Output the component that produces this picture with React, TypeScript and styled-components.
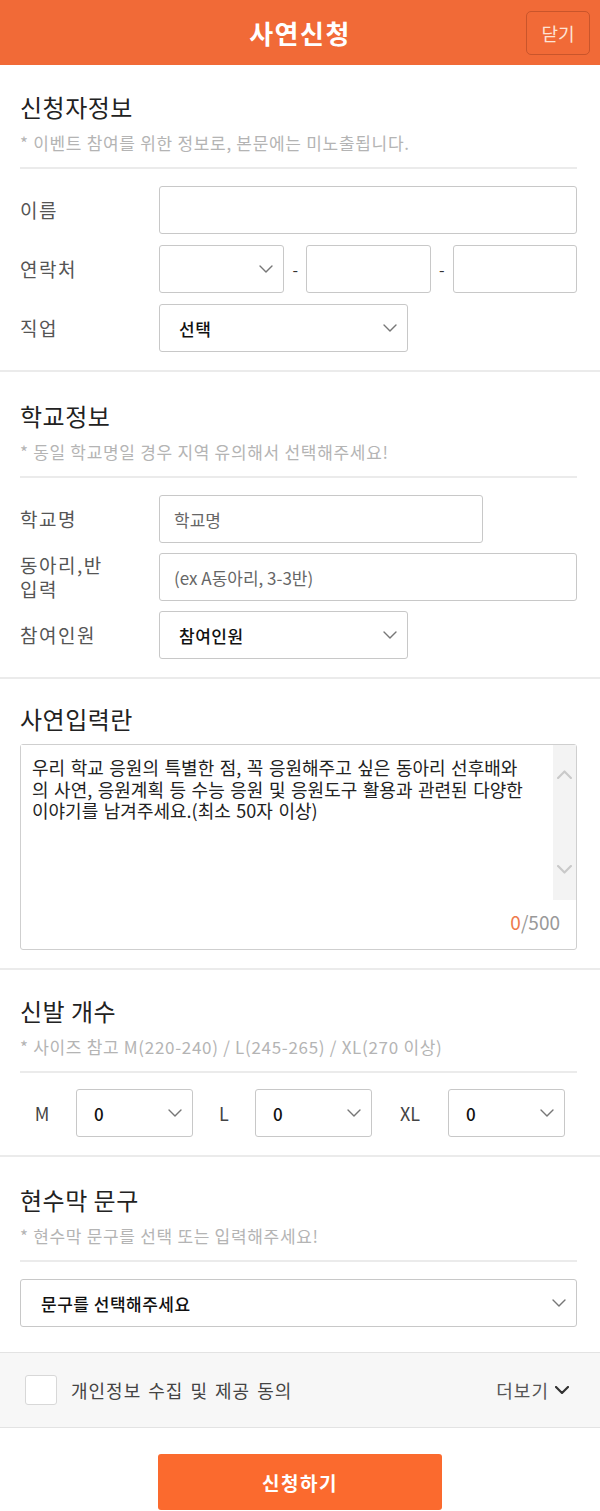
import React from 'react';
import styled, { createGlobalStyle } from 'styled-components';

const GlobalStyle = createGlobalStyle`
    html, body {
        margin: 0;
        padding: 0;
        background: #fff;
    }
    body {
        font-family: 'Noto Sans CJK KR', 'Noto Sans', sans-serif;
        color: #333;
    }
    * {
        box-sizing: border-box;
    }
`;

const Page = styled.div`
    width: 600px;
`;

const Header = styled.header`
    height: 65px;
    background: #f16a37;
    display: grid;
    grid-template-columns: 1fr auto 1fr;
    align-items: center;
`;

const HeaderTitle = styled.h1`
    grid-column: 2;
    margin: 0;
    font-size: 26px;
    font-weight: 700;
    color: #fff;
    letter-spacing: 1.5px;
`;

const CloseButton = styled.button`
    grid-column: 3;
    justify-self: end;
    margin-right: 10px;
    width: 64px;
    height: 44px;
    border: 1px solid #c9552b;
    border-radius: 5px;
    background: #f16a37;
    color: #fde3d6;
    font-family: inherit;
    font-size: 18px;
    padding: 0;
`;

const Section = styled.section<{ $top?: number; $noBorder?: boolean }>`
    padding: ${p => p.$top ?? 27}px 23px ${p => (p.$noBorder ? '25px' : '18px')} 20px;
    border-bottom: ${p => (p.$noBorder ? 'none' : '2px solid #ebebeb')};
`;

const SectionTitle = styled.h2`
    margin: 0;
    font-size: 24px;
    line-height: 30px;
    font-weight: 400;
    letter-spacing: 0.5px;
    color: #222;
`;

const SubTitle = styled.p`
    margin: 10px 0 0;
    padding-bottom: 13px;
    border-bottom: 2px solid #ebebeb;
    font-size: 17px;
    line-height: 22px;
    letter-spacing: 0.7px;
    color: #b4b4b4;
`;

const Fields = styled.div<{ $gap?: number }>`
    padding-top: 17px;
    display: flex;
    flex-direction: column;
    gap: ${p => p.$gap ?? 11}px;
`;

const FieldRow = styled.div`
    display: grid;
    grid-template-columns: 139px 1fr;
    align-items: center;
`;

const Label = styled.label`
    font-size: 19px;
    line-height: 24px;
    letter-spacing: 1.5px;
    color: #555;
`;

const TextInput = styled.input<{ $width?: string }>`
    width: ${p => p.$width || '100%'};
    height: 48px;
    border: 1px solid #c8c8c8;
    border-radius: 3px;
    padding: 0 14px;
    font-family: inherit;
    font-size: 17px;
    color: #333;
    outline: none;
    &::placeholder {
        color: #666;
    }
`;

const SelectBox = styled.div<{ $width?: string; $pad?: number }>`
    width: ${p => p.$width || '100%'};
    height: 48px;
    border: 1px solid #c8c8c8;
    border-radius: 3px;
    background: #fff;
    display: flex;
    align-items: center;
    justify-content: space-between;
    padding: 0 10px 0 ${p => p.$pad ?? 19}px;
    font-size: 17px;
    font-weight: 500;
    letter-spacing: 0.5px;
    color: #111;
`;

const PhoneGroup = styled.div`
    display: flex;
    align-items: center;
    > * {
        flex: 1;
        min-width: 0;
    }
`;

const Dash = styled.span`
    flex: 0 0 22px !important;
    text-align: center;
    font-size: 16px;
    color: #333;
`;

const StoryBox = styled.div`
    margin-top: 10px;
    height: 206px;
    border: 1px solid #cfcfcf;
    border-radius: 3px;
    display: flex;
    flex-direction: column;
`;

const StoryBody = styled.div`
    height: 155px;
    display: flex;
`;

const StoryText = styled.textarea`
    flex: 1;
    border: 0;
    resize: none;
    outline: none;
    overflow: hidden;
    padding: 12px 4px 0 11px;
    font-family: inherit;
    font-size: 18px;
    line-height: 21.7px;
    word-spacing: 1.5px;
    color: #222;
    &::placeholder {
        color: #222;
        opacity: 1;
    }
`;

const ScrollTrack = styled.div`
    width: 23px;
    background: #f3f3f3;
    display: flex;
    flex-direction: column;
    justify-content: space-between;
    align-items: center;
    padding: 25px 0 26px;
`;

const Counter = styled.div`
    flex: 1;
    display: flex;
    align-items: center;
    justify-content: flex-end;
    padding: 0 16px 6px 0;
    font-size: 19px;
    color: #999;
`;

const CountNow = styled.span`
    color: #ee7a4c;
`;

const ShoeRow = styled.div`
    padding-top: 16px;
    display: grid;
    grid-template-columns: 56px 117px 62px 117px 76px 117px;
    align-items: center;
`;

const SizeLabel = styled.span<{ $shift?: number }>`
    text-align: center;
    padding-right: ${p => p.$shift ?? 0}px;
    font-size: 18px;
    color: #444;
`;

const AgreeBar = styled.div`
    height: 76px;
    background: #f7f7f7;
    border-top: 1px solid #e3e3e3;
    border-bottom: 1px solid #e3e3e3;
    display: flex;
    align-items: center;
    padding: 0 31px 0 25px;
`;

const CheckBox = styled.span`
    width: 32px;
    height: 30px;
    background: #fff;
    border: 1px solid #d8d8d8;
    border-radius: 3px;
`;

const AgreeText = styled.span`
    margin-left: 14px;
    font-size: 18px;
    letter-spacing: 1px;
    word-spacing: 2px;
    color: #444;
`;

const MoreButton = styled.span`
    margin-left: auto;
    display: flex;
    align-items: center;
    gap: 6px;
    font-size: 18px;
    letter-spacing: 1px;
    color: #555;
`;

const SubmitArea = styled.div`
    padding-top: 26px;
    display: flex;
    justify-content: center;
`;

const SubmitButton = styled.button`
    width: 284px;
    height: 56px;
    border: 0;
    border-radius: 3px;
    background: #fb6a2e;
    color: #fff;
    font-family: inherit;
    font-size: 19px;
    font-weight: 700;
    letter-spacing: 1.5px;
`;

const Chevron: React.FC<{ up?: boolean; color?: string; w?: number; sw?: number }> = ({
    up,
    color = '#777',
    w = 14,
    sw = 1.4,
}) => (
    <svg width={w} height={w * 0.6} viewBox="0 0 14 8.4" fill="none">
        <path
            d={up ? 'M1 7.4 L7 1.4 L13 7.4' : 'M1 1 L7 7 L13 1'}
            stroke={color}
            strokeWidth={sw}
            strokeLinecap="round"
            strokeLinejoin="round"
        />
    </svg>
);

const Select: React.FC<{ value?: string; width?: string; pad?: number }> = ({ value, width, pad }) => (
    <SelectBox $width={width} $pad={pad}>
        <span>{value}</span>
        <Chevron />
    </SelectBox>
);

const storyPlaceholder =
    '우리 학교 응원의 특별한 점, 꼭 응원해주고 싶은 동아리 선후배와\n의 사연, 응원계획 등 수능 응원 및 응원도구 활용과 관련된 다양한\n이야기를 남겨주세요.(최소 50자 이상)';

export default function App() {
    return (
        <Page>
            <GlobalStyle />
            <Header>
                <HeaderTitle>사연신청</HeaderTitle>
                <CloseButton>닫기</CloseButton>
            </Header>

            <Section>
                <SectionTitle>신청자정보</SectionTitle>
                <SubTitle>* 이벤트 참여를 위한 정보로, 본문에는 미노출됩니다.</SubTitle>
                <Fields>
                    <FieldRow>
                        <Label>이름</Label>
                        <TextInput />
                    </FieldRow>
                    <FieldRow>
                        <Label>연락처</Label>
                        <PhoneGroup>
                            <Select />
                            <Dash>-</Dash>
                            <TextInput />
                            <Dash>-</Dash>
                            <TextInput />
                        </PhoneGroup>
                    </FieldRow>
                    <FieldRow>
                        <Label>직업</Label>
                        <Select value="선택" width="249px" />
                    </FieldRow>
                </Fields>
            </Section>

            <Section $top={29}>
                <SectionTitle>학교정보</SectionTitle>
                <SubTitle>* 동일 학교명일 경우 지역 유의해서 선택해주세요!</SubTitle>
                <Fields $gap={10}>
                    <FieldRow>
                        <Label>학교명</Label>
                        <TextInput $width="324px" placeholder="학교명" />
                    </FieldRow>
                    <FieldRow>
                        <Label>
                            동아리,반
                            <br />
                            입력
                        </Label>
                        <TextInput placeholder="(ex A동아리, 3-3반)" />
                    </FieldRow>
                    <FieldRow>
                        <Label>참여인원</Label>
                        <Select value="참여인원" width="249px" />
                    </FieldRow>
                </Fields>
            </Section>

            <Section $top={25}>
                <SectionTitle>사연입력란</SectionTitle>
                <StoryBox>
                    <StoryBody>
                        <StoryText placeholder={storyPlaceholder} />
                        <ScrollTrack>
                            <Chevron up color="#c9c9c9" w={15} sw={2} />
                            <Chevron color="#c9c9c9" w={15} sw={2} />
                        </ScrollTrack>
                    </StoryBody>
                    <Counter>
                        <CountNow>0</CountNow>/500
                    </Counter>
                </StoryBox>
            </Section>

            <Section $top={26}>
                <SectionTitle>신발 개수</SectionTitle>
                <SubTitle>* 사이즈 참고 M(220-240) / L(245-265) / XL(270 이상)</SubTitle>
                <ShoeRow>
                    <SizeLabel $shift={12}>M</SizeLabel>
                    <Select value="0" pad={17} />
                    <SizeLabel>L</SizeLabel>
                    <Select value="0" pad={17} />
                    <SizeLabel>XL</SizeLabel>
                    <Select value="0" pad={17} />
                </ShoeRow>
            </Section>

            <Section $top={28} $noBorder>
                <SectionTitle>현수막 문구</SectionTitle>
                <SubTitle>* 현수막 문구를 선택 또는 입력해주세요!</SubTitle>
                <Fields>
                    <Select value="문구를 선택해주세요" pad={20} />
                </Fields>
            </Section>

            <AgreeBar>
                <CheckBox />
                <AgreeText>개인정보 수집 및 제공 동의</AgreeText>
                <MoreButton>
                    더보기
                    <Chevron color="#333" w={14} sw={2.2} />
                </MoreButton>
            </AgreeBar>

            <SubmitArea>
                <SubmitButton>신청하기</SubmitButton>
            </SubmitArea>
        </Page>
    );
}
